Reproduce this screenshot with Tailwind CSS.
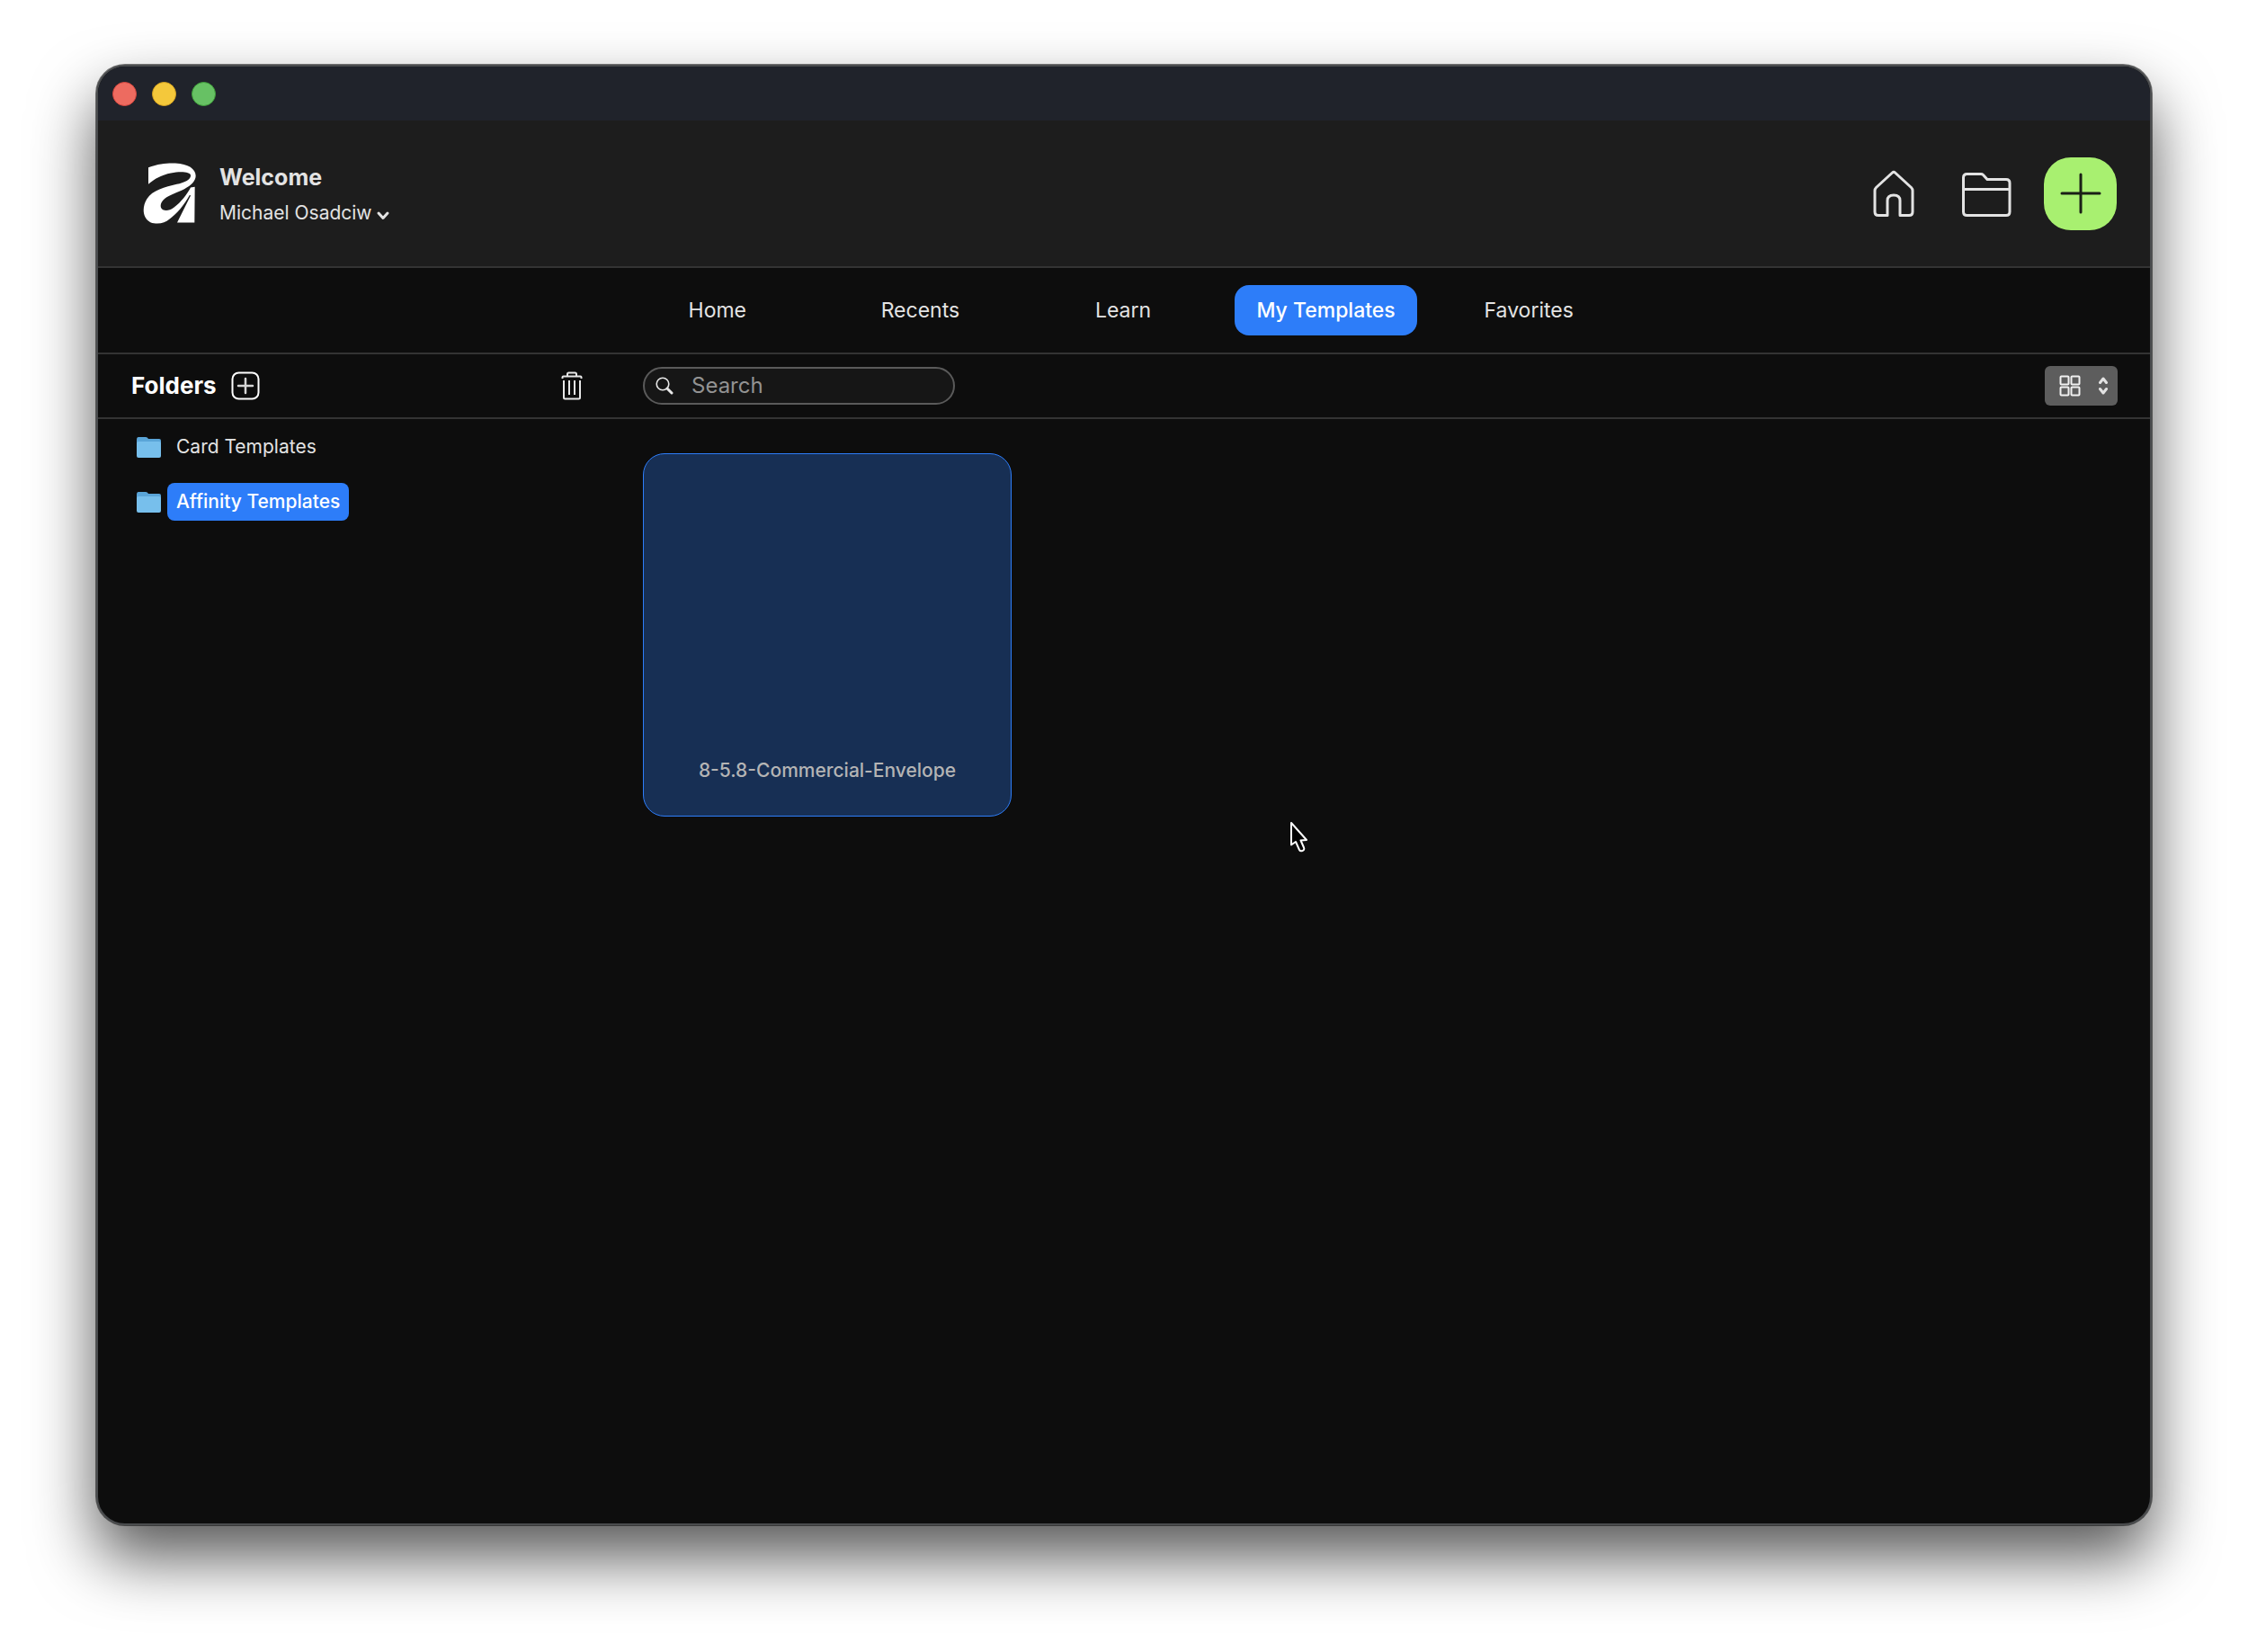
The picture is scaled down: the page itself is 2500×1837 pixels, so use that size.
<!DOCTYPE html>
<html lang="en">
  <head>
    <meta charset="UTF-8" />
    <meta name="viewport" content="width=device-width, initial-scale=1.0" />
    <title>Affinity - My Templates</title>
    <script src="https://cdn.jsdelivr.net/npm/@tailwindcss/browser@4"></script>
  </head>
  <body class="bg-white font-['Inter','Liberation_Sans',sans-serif]">
    <div class="flex min-h-screen px-[107px] pt-[72px] pb-[141px]">
      <div
        class="relative flex flex-1 flex-col overflow-hidden rounded-[32px] border-2 border-[#4a4c4e] bg-[#0d0d0d] text-[#e3e3e3] shadow-[0_0_0_1px_rgba(0,0,0,0.5),0_36px_70px_rgba(0,0,0,0.66)]"
      >
        <!-- Title bar -->
        <div class="flex h-[60px] items-center gap-[17px] bg-[#20232b] px-4">
          <button aria-label="Close" class="size-[27px] rounded-full border border-[#d8473f] bg-[#ed6b60]"></button>
          <button aria-label="Minimize" class="size-[27px] rounded-full border border-[#d9a520] bg-[#f4c83b]"></button>
          <button aria-label="Zoom" class="size-[27px] rounded-full border border-[#3f9f3a] bg-[#67c164]"></button>
        </div>

        <!-- Header -->
        <header class="flex h-[164px] items-center border-b-2 border-[#333333] bg-[#1d1d1d] pr-[37px] pl-[50px]">
          <svg class="h-[68px] w-[59px]" viewBox="207 365 177 203" fill="#fff" aria-hidden="true">
            <path d="M225 380C260 367 290 365 315 366C358 368 383 385 383 408C383 425 368 440 345 452C320 465 296 470 280 484C268 494 264 505 267 514C272 526 292 528 310 514C335 495 355 468 366 447L380 445L379 564L321 564L366 474L363 472C345 505 320 535 295 553C280 566 255 572 232 563C205 550 203 512 220 485C240 455 280 446 320 436C345 430 368 420 366 406C365 396 335 392 300 399C270 405 245 418 225 436Z" />
          </svg>
          <div class="ml-[26px] flex flex-col gap-2 pt-1">
            <h1 class="text-[25px] leading-8 font-bold">Welcome</h1>
            <button class="flex items-center gap-1 text-[21px] leading-8">
              Michael Osadciw
              <svg class="mt-1 h-3 w-4" viewBox="0 0 16 12" fill="none" stroke="currentColor" stroke-width="3" stroke-linecap="round" stroke-linejoin="round">
                <path d="M3 4l5 5.500l5-5.500" />
              </svg>
            </button>
          </div>
          <nav class="ml-auto flex items-center" aria-label="Main">
            <button aria-label="Home" class="mr-[51px]">
              <svg class="h-[54px] w-[48px]" viewBox="0 0 48 54" fill="none" stroke="#e3e3e3" stroke-width="3" stroke-linejoin="round">
                <path d="M17 51.500H7q-4 0-4-4V24q0-2 1.500-3.500L22.500 4q1.500-1.400 3 0L43.500 20.500Q45 22 45 24V47.500q0 4-4 4H31V35q0-6-7-6t-7 6Z" />
              </svg>
            </button>
            <button aria-label="Open" class="mr-9">
              <svg class="h-[54px] w-[56px]" viewBox="0 0 56 54" fill="none" stroke="#e3e3e3" stroke-width="3" stroke-linejoin="round">
                <path d="M2.500 48V9.500q0-4 4-4H22q1.500 0 2.500 1L29 11.500H50q4 0 4 4V47.500q0 4-4 4H6.500q-4 0-4-4ZM2.500 22.500H54" />
              </svg>
            </button>
            <button aria-label="New" class="flex size-[81px] items-center justify-center rounded-[30px] bg-[#a8f070]">
              <svg class="size-[46px]" viewBox="0 0 46 46" stroke="#1a1f16" stroke-width="3" stroke-linecap="round">
                <path d="M23 2V44M2 23H44" />
              </svg>
            </button>
          </nav>
        </header>

        <!-- Tabs -->
        <nav class="flex h-24 items-center justify-center border-b-2 border-[#333333] pr-[2px]" aria-label="Sections">
          <ul class="grid w-[1128px] grid-cols-5 justify-items-center text-[23px] leading-8">
            <li><a href="#" class="block px-6 py-3">Home</a></li>
            <li><a href="#" class="block px-6 py-3">Recents</a></li>
            <li><a href="#" class="block px-6 py-3">Learn</a></li>
            <li><a href="#" aria-current="page" class="block rounded-2xl bg-[#2d7df9] px-6 py-3 font-medium whitespace-nowrap text-white">My Templates</a></li>
            <li><a href="#" class="block px-6 py-3">Favorites</a></li>
          </ul>
        </nav>

        <!-- Toolbar -->
        <div class="flex h-[72px] items-center border-b-2 border-[#333333] pr-9">
          <div class="flex w-[606px] items-center pr-[67px] pl-[37px]">
            <h2 class="text-[26px] leading-8 font-bold text-white">Folders</h2>
            <button aria-label="Add folder" class="ml-4">
              <svg class="size-8" viewBox="0 0 32 32" fill="none" stroke="#fff" stroke-width="2">
                <rect x="1.500" y="1.500" width="29" height="29" rx="7" />
                <path d="M16 8V24M8 16H24" stroke="#d6d6d6" stroke-width="2.500" stroke-linecap="round" />
              </svg>
            </button>
            <button aria-label="Delete folder" class="ml-auto">
              <svg class="h-8 w-6" viewBox="0 0 24 32" fill="none" stroke="#e8e8e8" stroke-width="2" stroke-linejoin="round">
                <path d="M1.500 8V6.500Q1.500 5.500 2.500 5.500H21.500Q22.500 5.500 22.500 6.500V8M7 5V3Q7 1.500 8.500 1.500H15.500Q17 1.500 17 3V5M3 10V29Q3 30.500 4.500 30.500H19.500Q21 30.500 21 29V10M9 10V26M15 10V26" />
              </svg>
            </button>
          </div>
          <label class="flex h-[42px] w-[347px] items-center rounded-full border-2 border-[#5a5a5a] bg-[#161616] pl-3">
            <svg class="size-5" viewBox="0 0 20 20" fill="none" stroke="#e8e8e8" stroke-linecap="round">
              <circle cx="8" cy="8" r="6.800" stroke-width="1.600" />
              <path d="M13 13l5 5" stroke-width="3" />
            </svg>
            <input type="search" placeholder="Search" aria-label="Search templates" class="ml-5 w-60 bg-transparent text-[24px] leading-8 outline-none placeholder:text-[#929292]" />
          </label>
          <div class="relative ml-auto flex h-11 w-[81px] items-center justify-between rounded-md bg-[#5d5d5d] pr-[10px] pl-4">
            <svg class="size-6" viewBox="0 0 24 24" fill="none" stroke="#f0f0f0" stroke-width="2">
              <rect x="1.500" y="1.500" width="9" height="9" rx="1" />
              <rect x="13.500" y="1.500" width="9" height="9" rx="1" />
              <rect x="1.500" y="13.500" width="9" height="9" rx="1" />
              <rect x="13.500" y="13.500" width="9" height="9" rx="1" />
            </svg>
            <svg class="h-5 w-3" viewBox="0 0 12 20" fill="none" stroke="#e3e3e3" stroke-width="3" stroke-linecap="round" stroke-linejoin="round">
              <path d="M2.500 6.500L6 2l3.500 4.500M2.500 13.500L6 18l3.500-4.500" />
            </svg>
            <select aria-label="View" class="absolute inset-0 size-full opacity-0">
              <option>Grid</option>
              <option>List</option>
            </select>
          </div>
        </div>

        <!-- Content -->
        <div class="flex flex-1">
          <aside class="w-[606px] pt-[10px] pl-[42px]">
            <ul class="flex flex-col gap-[19px] text-[21px] leading-[42px]">
              <li class="flex items-center">
                <svg class="h-6 w-[29px]" viewBox="0 0 29 24" aria-hidden="true">
                  <path d="M1 4Q1 1 3 1H11Q13 1 14 3H26Q28 3 28 5V12H1Z" fill="#5aa5d8" />
                  <rect x="1" y="6" width="27" height="18" rx="2" fill="#77bfec" />
                </svg>
                <a href="#" class="ml-[6px] rounded-lg px-[10px]">Card Templates</a>
              </li>
              <li class="flex items-center">
                <svg class="h-6 w-[29px]" viewBox="0 0 29 24" aria-hidden="true">
                  <path d="M1 4Q1 1 3 1H11Q13 1 14 3H26Q28 3 28 5V12H1Z" fill="#5aa5d8" />
                  <rect x="1" y="6" width="27" height="18" rx="2" fill="#77bfec" />
                </svg>
                <a href="#" aria-current="true" class="ml-[6px] rounded-lg bg-[#2d7df9] px-[10px] font-medium text-white">Affinity Templates</a>
              </li>
            </ul>
          </aside>
          <main class="flex-1 pt-[38px]">
            <button class="flex h-[404px] w-[410px] flex-col items-center justify-end rounded-3xl border border-[#2d7df9] bg-[#172f54] pb-[34px] text-[21px] leading-8 font-medium text-[#b4b4b4]">
              8-5.8-Commercial-Envelope
            </button>
          </main>
        </div>

        <!-- Mouse pointer -->
        <svg class="pointer-events-none absolute top-[838px] left-[1324px] h-9 w-6" viewBox="0 0 24 36" fill="#000" stroke="#fff" stroke-width="2" stroke-linejoin="round" aria-hidden="true">
          <path d="M3 3V27.500L8 24L12 33Q13 35 15.500 34Q18 33 17 30.500L13.500 22.500L20 22Z" />
        </svg>
      </div>
    </div>
  </body>
</html>
